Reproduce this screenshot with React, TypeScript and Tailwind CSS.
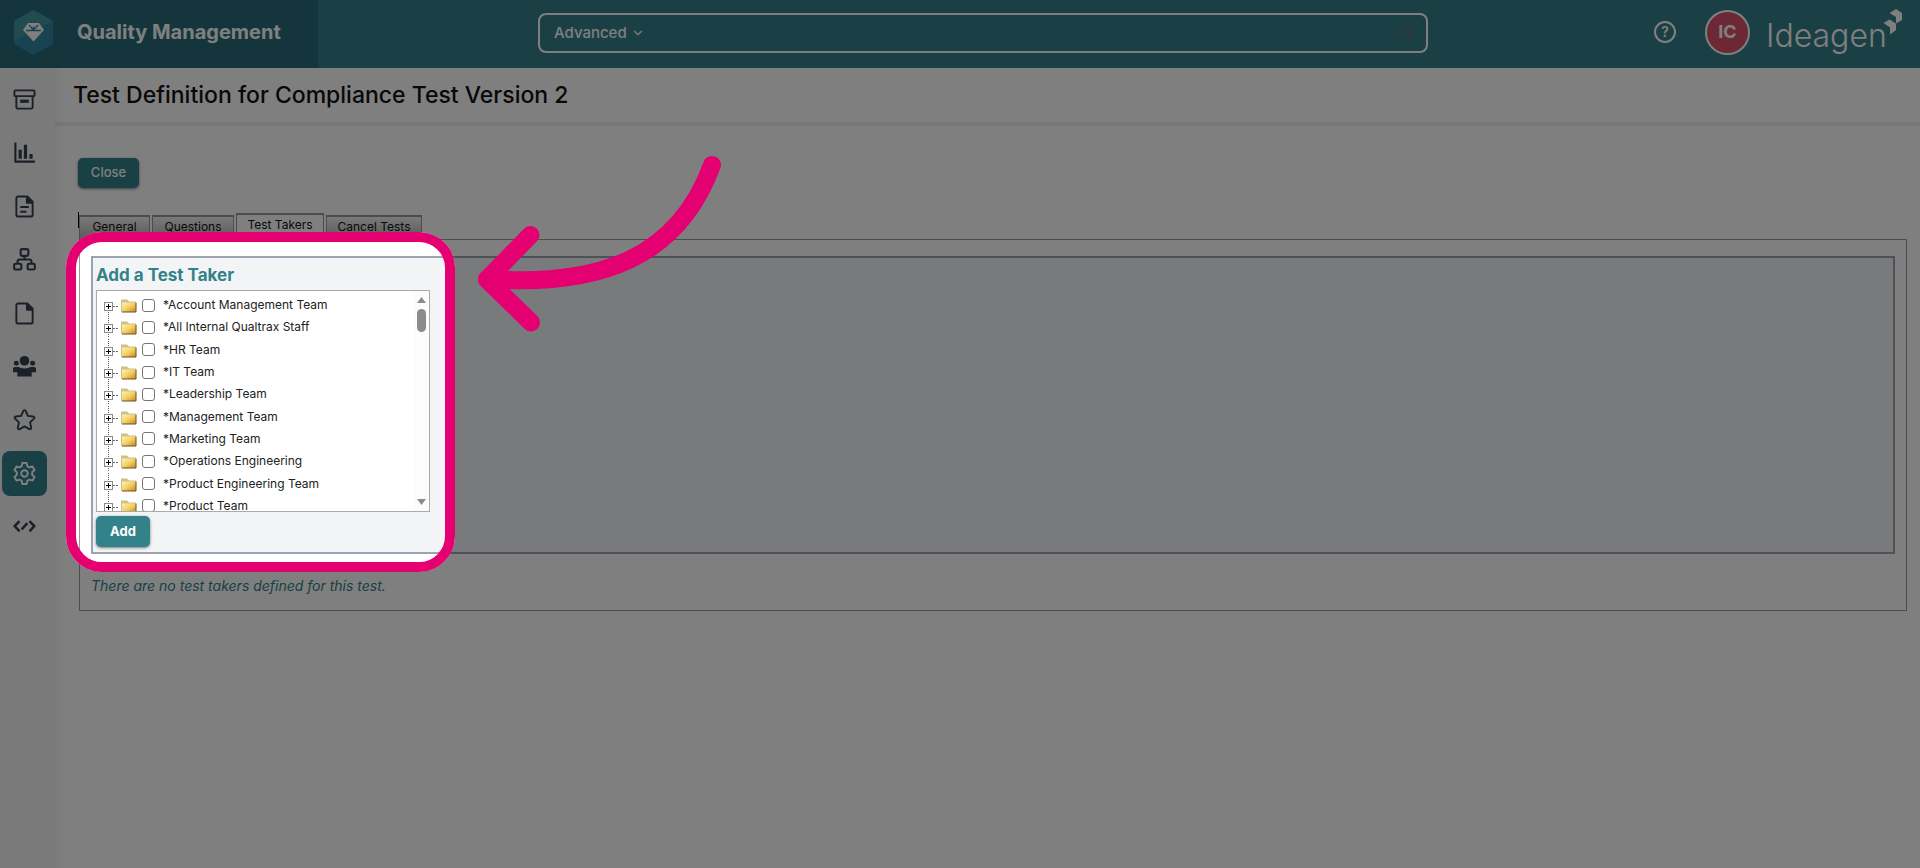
import React, { useState } from 'react';
import { ChevronDown, Search } from 'lucide-react';
import clsx from 'clsx';

const teams = [
  '*Account Management Team',
  '*All Internal Qualtrax Staff',
  '*HR Team',
  '*IT Team',
  '*Leadership Team',
  '*Management Team',
  '*Marketing Team',
  '*Operations Engineering',
  '*Product Engineering Team',
  '*Product Team',
];

const tabs = [
  { label: 'General', width: 'w-[71px]' },
  { label: 'Questions', width: 'w-[82px]' },
  { label: 'Test Takers', width: 'w-[88px]' },
  { label: 'Cancel Tests', width: 'w-[96px]' },
];

// Sidebar icons, all drawn on a 24x24 grid
const navItems = [
  {
    label: 'Archive',
    icon: (
      <g fill="none" stroke="currentColor" strokeWidth="2" strokeLinejoin="round">
        <rect x="1.500" y="2.500" width="21" height="6" rx="1" />
        <path d="M3.500 8.500V20A1.500 1.500 0 0 0 5 21.500h14a1.500 1.500 0 0 0 1.500-1.500V8.500" />
        <path d="M7.500 13.800h9" strokeWidth="3.400" />
      </g>
    ),
  },
  {
    label: 'Reports',
    icon: (
      <g fill="none" stroke="currentColor">
        <path d="M2.500 1.500v20H23" strokeWidth="2.200" />
        <path d="M7.500 9v9.500M13 4v14.500M18.800 13.500v5" strokeWidth="3.400" />
      </g>
    ),
  },
  {
    label: 'Documents',
    icon: (
      <g fill="none" stroke="currentColor" strokeWidth="2" strokeLinejoin="round">
        <path d="M5 1.500h10l5.500 5.500v13.500a2 2 0 0 1-2 2H5.500a2 2 0 0 1-2-2v-17a2 2 0 0 1 2-2z" />
        <path d="M14.500 2v6H20z" fill="currentColor" />
        <path d="M7.500 12.500h9M7.500 17.500h6.500" strokeWidth="2.200" />
      </g>
    ),
  },
  {
    label: 'Workflow',
    icon: (
      <g fill="none" stroke="currentColor" strokeWidth="2.200" strokeLinejoin="round">
        <rect x="8" y="1.200" width="8" height="7" rx="1.500" />
        <rect x="1.200" y="16.500" width="7.500" height="6" rx="1.500" />
        <rect x="15.300" y="16.500" width="7.500" height="6" rx="1.500" />
        <path d="M12 8v4M4.800 16.500V14a2 2 0 0 1 2-2h10.400a2 2 0 0 1 2 2v2.500" />
      </g>
    ),
  },
  {
    label: 'Files',
    icon: (
      <g fill="none" stroke="currentColor" strokeWidth="2" strokeLinejoin="round">
        <path d="M5.500 1.500H15l5.500 5.500v13.500a2 2 0 0 1-2 2h-13a2 2 0 0 1-2-2v-17a2 2 0 0 1 2-2z" />
        <path d="M14.500 2v6H20z" fill="currentColor" />
      </g>
    ),
  },
  {
    label: 'People',
    icon: (
      <g fill="currentColor">
        <circle cx="12" cy="6" r="5" />
        <circle cx="3.500" cy="8.500" r="2.600" />
        <circle cx="20.500" cy="8.500" r="2.600" />
        <path d="M0 14.500a2 2 0 0 1 2-2h4q1.500 1.500 6 1.500t6-1.500h4a2 2 0 0 1 2 2V18h-4.500v4.500h-15V18H0z" />
      </g>
    ),
  },
  {
    label: 'Favorites',
    icon: (
      <path
        d="M12 2.200c.6 0 1 .3 1.200.8l2.300 5.200 5.600.7c1.200.1 1.600 1.400.8 2.200l-4.100 3.900 1.200 5.600c.2 1.100-.9 1.900-1.900 1.400L12 19.200 6.900 22c-1 .5-2.100-.3-1.900-1.400L6.200 15l-4.100-3.900c-.8-.8-.4-2.100.8-2.200l5.600-.7L10.800 3c.2-.5.6-.8 1.200-.8z"
        fill="none"
        stroke="currentColor"
        strokeWidth="2"
        strokeLinejoin="round"
      />
    ),
  },
  {
    label: 'Settings',
    active: true,
    icon: (
      <g fill="none" stroke="currentColor" strokeWidth="2" strokeLinejoin="round">
        <path d="M9.800 1h4.400l.7 3.300 2.200 1.300 3.200-1 2.200 3.800-2.500 2.300v2.600l2.500 2.300-2.200 3.800-3.200-1-2.200 1.300-.7 3.300H9.800l-.7-3.300-2.200-1.300-3.200 1-2.200-3.800L4 13.300v-2.600L1.500 8.400l2.200-3.800 3.200 1 2.200-1.300z" />
        <circle cx="12" cy="12" r="3.400" />
      </g>
    ),
  },
  {
    label: 'Developer',
    icon: (
      <path
        d="M6.800 6.500 1.800 11.500l5 5.500M17.200 6.500l5 5-5 5.500M15 8.500l-6 6.500"
        fill="none"
        stroke="currentColor"
        strokeWidth="2.600"
      />
    ),
  },
];

function Folder() {
  return (
    <svg width="16" height="14" viewBox="0 0 16 14" aria-hidden="true">
      <defs>
        <linearGradient id="folder" x1="0" y1="0" x2="1" y2="1">
          <stop offset="0" stopColor="#fff3b8" />
          <stop offset="0.500" stopColor="#f2cf62" />
          <stop offset="1" stopColor="#c8871c" />
        </linearGradient>
      </defs>
      <path d="M0 .5h6l2 2h7v10.500H0z" fill="#cfc08a" />
      <path d="M1 3.500h14V13H1z" fill="url(#folder)" />
      <path d="M1 13h14V3.500" fill="none" stroke="#6b5520" />
    </svg>
  );
}

function Expander({ first }: { first: boolean }) {
  return (
    <svg width="16" height="22" viewBox="0 0 16 22" aria-hidden="true">
      <path d={first ? 'M5.500 12v10' : 'M5.500 0v22'} stroke="#555" strokeDasharray="1 1" />
      <path d="M10 12.500h5" stroke="#666" strokeDasharray="2 1" />
      <rect x="1.500" y="8.500" width="8" height="8" fill="#fff" stroke="#8a8a8a" />
      <path d="M3 12.500h5M5.500 10v5" stroke="#000" />
    </svg>
  );
}

function Header() {
  return (
    <header className="flex h-[68px] items-center bg-[#35808a] text-white">
      <div className="flex h-full w-[318px] shrink-0 items-center gap-6 bg-[#286b76] pb-1 pl-3.5">
        <svg width="39" height="45" viewBox="0 0 39 45" aria-hidden="true">
          <path d="M19.500 0L39 11v23L19.500 45 0 34V11z" fill="#2f86a6" />
          <path d="M19.500 0L39 11 0 31V11z" fill="#4396a3" />
          <path d="M14 13h11l5 7-10.500 11.500L9 20z" fill="#fff" />
          <path d="M12 20.500h15M15 15l4.500 5 4.500-5M19.500 20v-3.500" fill="none" stroke="#2f86a6" strokeWidth="1.300" />
        </svg>
        <span className="text-xl font-bold">Quality Management</span>
      </div>

      <div className="flex flex-1 justify-center pb-0.5">
        <div className="mr-[226px] ml-[220px] flex h-10 flex-1 items-center rounded-lg border-2 border-white pr-3 pl-3.5">
          <button className="flex items-center gap-1 text-[15px] font-medium">
            Advanced <ChevronDown size={14} />
          </button>
          <input aria-label="Search" className="min-w-0 flex-1 bg-transparent px-3 outline-none" />
          <Search size={18} className="text-[#74616e]" />
        </div>
      </div>

      <div className="flex shrink-0 items-center pb-1">
        <button aria-label="Help" className="size-[22px] rounded-full border-2 border-white text-sm leading-none font-semibold">
          ?
        </button>
        <button className="ml-[29px] size-[45px] rounded-full border-2 border-white bg-[#d8506a] text-lg font-bold">
          IC
        </button>
        <div className="ml-4 flex items-start pr-[18px]">
          <span className="w-[117px] pt-2 text-[32px] leading-10 font-light">Ideagen</span>
          <svg width="19" height="27" viewBox="0 0 19 27" fill="#fff" aria-hidden="true">
            <path d="M6.500 5L13 1l6 4v7l-6 3.500V9z" />
            <path d="M.5 15l6-3.500 6.500 4V22l-6 4.500v-7z" />
          </svg>
        </div>
      </div>
    </header>
  );
}

function Sidebar() {
  return (
    <nav className="z-10 w-[55px] shrink-0 bg-[#f5f5f6] px-0.5 pt-[9px] shadow-[2px_0_10px_rgba(0,0,0,0.08)]">
      <div className="flex h-[472px] flex-col justify-between">
        {navItems.map((item) => (
          <a
            key={item.label}
            href="#"
            aria-label={item.label}
            className={clsx(
              'flex size-[45px] items-center justify-center rounded-lg',
              item.active ? 'bg-[#33828a] text-white' : 'text-[#374151]'
            )}
          >
            <svg width="23" height="23" viewBox="0 0 24 24">{item.icon}</svg>
          </a>
        ))}
      </div>
    </nav>
  );
}

function TeamTree() {
  return (
    <div className="flex h-[222px] w-[334px] overflow-hidden border border-[#aaa] bg-white">
      <ul className="grid h-[226px] flex-1 grid-rows-10 pt-[3px] pl-1.5">
        {teams.map((team, i) => (
          <li key={team} className="flex min-h-0 items-center">
            <Expander first={i === 0} />
            <label className="flex items-center text-xs text-[#222]">
              <span className="mr-[5px] ml-0.5 pt-0.5">
                <Folder />
              </span>
              <input type="checkbox" className="mr-2 size-[13px] appearance-none rounded-[3px] border border-[#767676] bg-white" />
              {team}
            </label>
          </li>
        ))}
      </ul>
      {/* Scrollbar */}
      <div className="flex w-4 flex-col items-center bg-[#fcfcfc] py-1.5 text-[#8b8b8b]">
        <svg width="9" height="6" viewBox="0 0 9 6" fill="currentColor"><path d="M4.500 0L9 6H0z" /></svg>
        <div className="mt-1.5 h-[23px] w-[9px] rounded-full bg-[#8b8b8b]" />
        <svg className="mt-auto" width="9" height="6" viewBox="0 0 9 6" fill="currentColor"><path d="M0 0h9L4.500 6z" /></svg>
      </div>
    </div>
  );
}

// Dims the page except for the "Add a Test Taker" panel and points at it
function Spotlight() {
  return (
    <div className="pointer-events-none absolute inset-0 z-20 overflow-hidden">
      <div className="absolute top-[232px] left-[66px] h-[340px] w-[389px] rounded-[36px] border-[10px] border-[#e50072] shadow-[0_0_0_3000px_rgba(0,0,0,0.5)]" />
      <svg className="absolute top-[150px] left-[470px]" width="260" height="190" viewBox="470 150 260 190">
        <g fill="none" stroke="#e50072" strokeWidth="18" strokeLinecap="round" strokeLinejoin="round">
          <path d="M487 279C600 287 678 258 712 165" />
          <path d="M530.500 235L487 279.500L531 322.500" />
        </g>
      </svg>
    </div>
  );
}

export default function App() {
  const [activeTab, setActiveTab] = useState('Test Takers');

  return (
    <div className="relative flex min-h-screen flex-col bg-white font-['Inter','Liberation_Sans',sans-serif] text-[#111]">
      <Header />
      <div className="flex flex-1">
        <Sidebar />
        <main className="min-w-0 flex-1">
          <div className="flex h-[58px] items-center border-b-4 border-[#f1f1f2] pl-[18px]">
            <h1 className="text-[23px] font-medium">Test Definition for Compliance Test Version 2</h1>
          </div>

          <div className="pt-8 pr-[13px] pl-[23px]">
            <button className="h-[30px] w-[61px] rounded-[5px] bg-[#33828a] text-[13px] font-medium text-white shadow-[0_1px_3px_rgba(0,0,0,0.5)]">
              Close
            </button>

            {/* Tabs */}
            <div className="mt-6 flex h-[27px] items-end gap-0.5 text-xs">
              <span className="h-4 w-px self-start bg-black" />
              {tabs.map((tab) => (
                <button
                  key={tab.label}
                  onClick={() => setActiveTab(tab.label)}
                  className={clsx(
                    'flex items-start justify-center border border-t-2 border-b-0 border-[#999] pt-0.5 first-of-type:-ml-0.5',
                    tab.width,
                    activeTab === tab.label
                      ? 'h-[26px] bg-white'
                      : 'h-6 bg-linear-to-b from-[#f4f4f4] to-[#b5b5b5]'
                  )}
                >
                  {tab.label}
                </button>
              ))}
            </div>

            {/* Tab panel */}
            <section className="ml-px border border-[#9b9b9b] px-[11px] pt-4">
              <div className="border-2 border-[#9ca3af] bg-[#f3f4f6] px-[3px] pb-[5px]">
                <h2 className="flex h-8 items-center pt-1 text-[17px] font-bold text-[#33828a]">Add a Test Taker</h2>
                <TeamTree />
                <button className="mt-1 block h-[31px] w-[54px] rounded-[5px] bg-[#33828a] text-[13px] font-bold text-white shadow-[0_1px_3px_rgba(0,0,0,0.5)]">
                  Add
                </button>
              </div>
              <p className="flex h-14 items-center pt-2 text-sm text-[#33828a] italic">
                There are no test takers defined for this test.
              </p>
            </section>
          </div>
        </main>
      </div>
      <Spotlight />
    </div>
  );
}
